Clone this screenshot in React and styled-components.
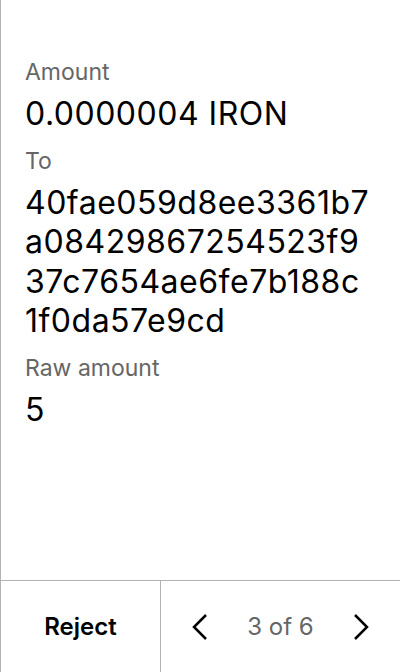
import React from "react";
import styled, { createGlobalStyle } from "styled-components";

const Global = createGlobalStyle`
  html, body { margin: 0; padding: 0; background: #fff; }
  body { font-family: Inter, "Noto Sans", sans-serif; }
  * { box-sizing: border-box; }
`;

const Screen = styled.div`
  width: 400px;
  height: 672px;
  display: flex;
  flex-direction: column;
  border-left: 1px solid #b3b3b3;
  background: #fff;
`;

const Content = styled.div`
  flex: 1;
  padding: 58px 24px 0 24px;
  display: flex;
  flex-direction: column;
`;

const Field = styled.div`
  display: flex;
  flex-direction: column;
  gap: 8px;
  margin-bottom: 13px;
`;

const Label = styled.div`
  font-size: 23px;
  line-height: 28px;
  color: #666;
`;

const Value = styled.div`
  font-size: 32px;
  line-height: 39.5px;
  letter-spacing: 0.5px;
  color: #000;
  word-break: break-all;
`;

const ValueLine = styled.span`
  display: block;
`;

const Footer = styled.div`
  height: 92px;
  border-top: 1px solid #b3b3b3;
  display: flex;
`;

const RejectButton = styled.div`
  width: 160px;
  border-right: 1px solid #b3b3b3;
  display: flex;
  align-items: center;
  justify-content: center;
  font-size: 24px;
  font-weight: 600;
  color: #000;
`;

const Pager = styled.div`
  flex: 1;
  display: flex;
  align-items: center;
  justify-content: space-between;
  padding: 0 30px 0 30px;
`;

const PageText = styled.div`
  font-size: 24px;
  color: #666;
`;

const Chevron = ({ dir }) => (
  <svg width="18" height="30" viewBox="0 0 18 30">
    {dir === "left" ? (
      <polyline points="15,3 3,15 15,27" fill="none" stroke="#000" strokeWidth="2.5" />
    ) : (
      <polyline points="3,3 15,15 3,27" fill="none" stroke="#000" strokeWidth="2.5" />
    )}
  </svg>
);

const fields = [
  { label: "Amount", lines: ["0.0000004 IRON"] },
  {
    label: "To",
    lines: ["40fae059d8ee3361b7", "a08429867254523f9", "37c7654ae6fe7b188c", "1f0da57e9cd"],
  },
  { label: "Raw amount", lines: ["5"] },
];

export default function App() {
  return (
    <>
      <Global />
      <Screen>
        <Content>
          {fields.map((f) => (
            <Field key={f.label}>
              <Label>{f.label}</Label>
              <Value>
                {f.lines.map((l) => (
                  <ValueLine key={l}>{l}</ValueLine>
                ))}
              </Value>
            </Field>
          ))}
        </Content>
        <Footer>
          <RejectButton>Reject</RejectButton>
          <Pager>
            <Chevron dir="left" />
            <PageText>3 of 6</PageText>
            <Chevron dir="right" />
          </Pager>
        </Footer>
      </Screen>
    </>
  );
}
